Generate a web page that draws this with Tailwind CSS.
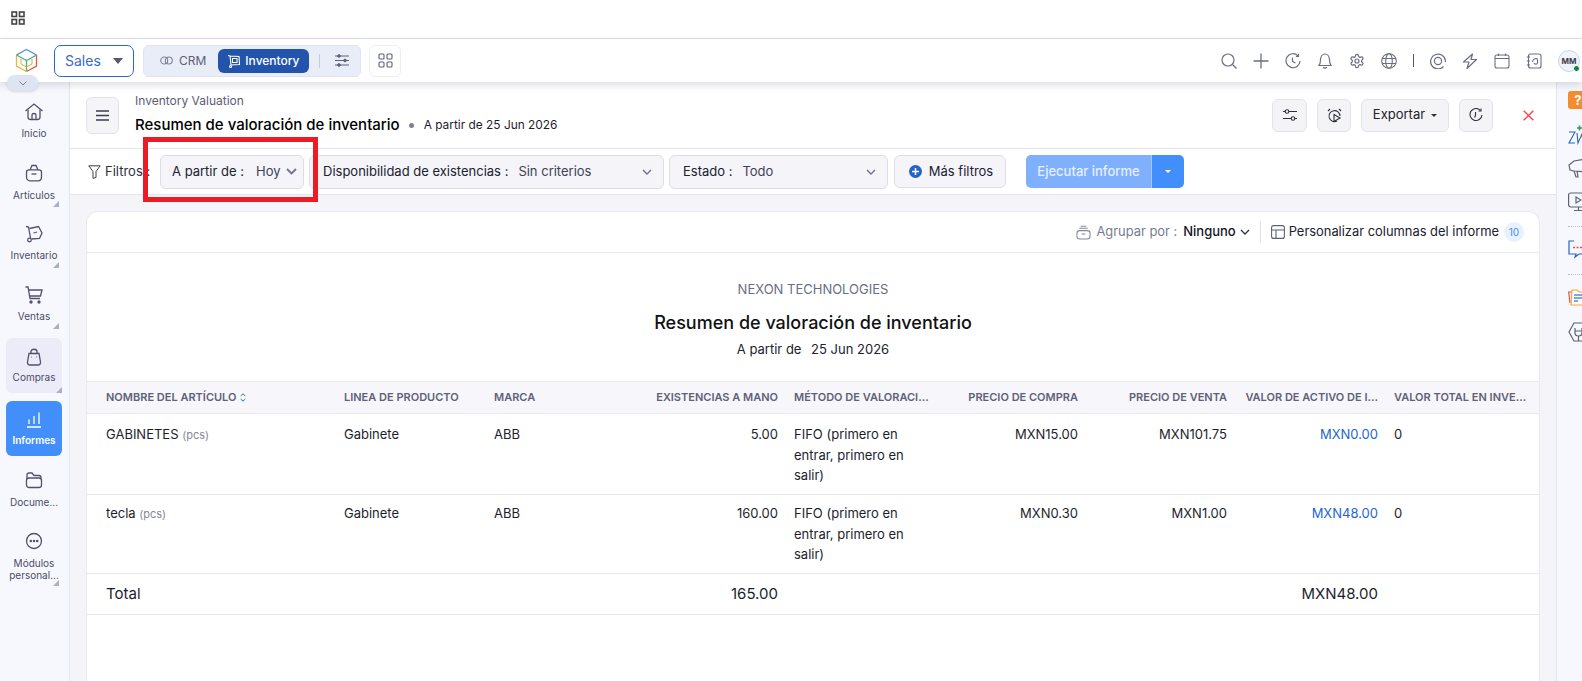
<!DOCTYPE html>
<html lang="en">
<head>
  <meta charset="UTF-8">
  <title>Resumen de valoración de inventario</title>
  <script src="https://cdn.jsdelivr.net/npm/@tailwindcss/browser@4"></script>
</head>
<body class="h-screen overflow-hidden bg-white font-['Inter',sans-serif] text-[13px] text-[#1d1e2c] relative">

  <!-- top strip -->
  <div class="h-[39px] border-b border-[#dedfe6] pl-[11px] pt-[11px]">
    <svg width="14" height="14" viewBox="0 0 14 14" fill="none" stroke="#444" stroke-width="1.6"><rect x="1" y="1" width="4.5" height="4.5"/><rect x="8.5" y="1" width="4.5" height="4.5"/><rect x="1" y="8.5" width="4.5" height="4.5"/><rect x="8.5" y="8.5" width="4.5" height="4.5"/></svg>
  </div>

  <!-- app header -->
  <div class="relative z-10 h-[43px] flex items-center bg-white shadow-[0_3px_8px_rgba(40,45,70,0.16)]">
    <svg class="ml-[15px]" width="23" height="25" viewBox="0 0 23 25" fill="none" stroke-width="1.3">
      <path d="M1.5 7 L11.5 1.5 L21.5 7" stroke="#4a90d9"/>
      <path d="M1.5 7 V18 L11.5 23.5" stroke="#f2b632"/>
      <path d="M21.5 7 V18 L11.5 23.5" stroke="#e5574d"/>
      <path d="M1.5 7 L11.5 12.5 L21.5 7" stroke="#4cae8a"/>
      <path d="M11.5 12.5 V23" stroke="#4caf6a"/>
      <path d="M6 11 V16 L11.5 19 L17 16 V11" stroke="#c9b44a" stroke-width="1"/>
    </svg>
    <div class="ml-[16px] w-[80px] h-[32px] border border-[#2b66c9] rounded-[7px] flex items-center pl-[10px] text-[14px] text-[#3b6cc7]">
      Sales
      <span class="ml-[12px] w-0 h-0 border-x-[5px] border-x-transparent border-t-[6px] border-t-[#55586c]"></span>
    </div>
    <div class="ml-[9px] w-[218px] h-[32px] bg-[#e9edf7] border border-[#dfe4f2] rounded-[6px] flex items-center text-[12px]">
      <svg class="ml-[16px]" width="13" height="9" viewBox="0 0 13 9" fill="none" stroke="#7d8096" stroke-width="1.1"><circle cx="4.2" cy="4.5" r="3.5"/><circle cx="8.8" cy="4.5" r="3.5"/></svg>
      <span class="ml-[6px] text-[#5d6078]">CRM</span>
      <div class="ml-[12px] w-[91px] h-[24px] rounded-[6px] bg-[#2354ab] flex items-center text-white font-medium">
        <svg class="ml-[9px]" width="14" height="14" viewBox="0 0 14 14" fill="none" stroke="#fff" stroke-width="1.1"><path d="M1 1.5 L3 2 L4 11 L12.5 10.5 L12 2.5 L3 2"/><path d="M5.5 4.5 H10 V8.5 H5.5 Z"/><circle cx="3.5" cy="12.5" r="1"/></svg>
        <span class="ml-[4px]">Inventory</span>
      </div>
      <span class="ml-[10px] w-px h-[14px] bg-[#c6cadb]"></span>
      <svg class="ml-[15px]" width="14" height="13" viewBox="0 0 14 13" fill="none" stroke="#5d6078" stroke-width="1"><path d="M0 2 H14 M0 6.5 H14 M0 11 H14"/><circle cx="4" cy="2" r="1.3" fill="#5d6078"/><circle cx="10" cy="6.5" r="1.3" fill="#5d6078"/><circle cx="4" cy="11" r="1.3" fill="#5d6078"/></svg>
    </div>
    <div class="ml-[8px] w-[32px] h-[32px] border border-[#eceef4] rounded-[6px] flex items-center justify-center">
      <svg width="15" height="15" viewBox="0 0 15 15" fill="none" stroke="#5d6078" stroke-width="1.1"><rect x="1" y="1" width="5" height="5" rx="1"/><rect x="9" y="1" width="5" height="5" rx="1"/><rect x="1" y="9" width="5" height="5" rx="1"/><rect x="9" y="9" width="5" height="5" rx="1"/></svg>
    </div>

    <div class="ml-auto flex items-center">
      <div class="flex items-center gap-[16px]">
        <!-- search -->
        <svg width="16" height="16" viewBox="0 0 16 16" fill="none" stroke="#6b6e82" stroke-width="1.2"><circle cx="7" cy="7" r="6"/><path d="M11.5 11.5 L15.5 15.5"/></svg>
        <!-- plus -->
        <svg width="16" height="16" viewBox="0 0 16 16" fill="none" stroke="#6b6e82" stroke-width="1.3"><path d="M8 0.5 V15.5 M0.5 8 H15.5"/></svg>
        <!-- history -->
        <svg width="16" height="16" viewBox="0 0 16 16" fill="none" stroke="#6b6e82" stroke-width="1.2"><path d="M13 2.8 A7 7 0 1 0 15 8"/><path d="M13.5 0.8 V3.4 H10.9"/><path d="M7.5 4.5 V8.5 L10.5 10"/></svg>
        <!-- bell -->
        <svg width="16" height="16" viewBox="0 0 16 16" fill="none" stroke="#6b6e82" stroke-width="1.2"><path d="M2 12.5 C3.5 11 3.3 9 3.5 6.5 C3.7 3.5 5.5 1 8 1 C10.5 1 12.3 3.5 12.5 6.5 C12.7 9 12.5 11 14 12.5 Z"/><path d="M6.3 14 C6.8 15.5 9.2 15.5 9.7 14"/></svg>
        <!-- gear -->
        <svg width="16" height="16" viewBox="0 0 24 24" fill="none" stroke="#6b6e82" stroke-width="1.8"><path d="M12.22 2h-.44a2 2 0 0 0-2 2v.18a2 2 0 0 1-1 1.73l-.43.25a2 2 0 0 1-2 0l-.15-.08a2 2 0 0 0-2.73.73l-.22.38a2 2 0 0 0 .73 2.73l.15.1a2 2 0 0 1 1 1.72v.51a2 2 0 0 1-1 1.74l-.15.09a2 2 0 0 0-.73 2.73l.22.38a2 2 0 0 0 2.73.73l.15-.08a2 2 0 0 1 2 0l.43.25a2 2 0 0 1 1 1.73V20a2 2 0 0 0 2 2h.44a2 2 0 0 0 2-2v-.18a2 2 0 0 1 1-1.73l.43-.25a2 2 0 0 1 2 0l.15.08a2 2 0 0 0 2.73-.73l.22-.39a2 2 0 0 0-.73-2.73l-.15-.08a2 2 0 0 1-1-1.74v-.5a2 2 0 0 1 1-1.74l.15-.09a2 2 0 0 0 .73-2.73l-.22-.38a2 2 0 0 0-2.73-.73l-.15.08a2 2 0 0 1-2 0l-.43-.25a2 2 0 0 1-1-1.73V4a2 2 0 0 0-2-2z"/><circle cx="12" cy="12" r="3"/></svg>
        <!-- globe -->
        <svg width="16" height="16" viewBox="0 0 16 16" fill="none" stroke="#6b6e82" stroke-width="1.1"><circle cx="8" cy="8" r="7.3"/><ellipse cx="8" cy="8" rx="3.3" ry="7.3"/><path d="M1 5.5 H15 M1 10.5 H15"/></svg>
      </div>
      <span class="ml-[16px] w-px h-[13px] bg-[#55586c]"></span>
      <div class="ml-[16px] flex items-center gap-[16px]">
        <!-- at -->
        <svg width="16" height="16" viewBox="0 0 16 16" fill="none" stroke="#6b6e82" stroke-width="1.2"><path d="M13.5 13.5 A7.4 7.4 0 1 1 15.4 8 V9"/><circle cx="8" cy="8" r="3.6"/></svg>
        <!-- bolt -->
        <svg width="16" height="16" viewBox="0 0 16 16" fill="none" stroke="#6b6e82" stroke-width="1.2"><path d="M10.5 1 L1.5 9 H7 L5 15.5 L14.5 6.5 H9 Z" stroke-linejoin="round"/></svg>
        <!-- calendar -->
        <svg width="16" height="16" viewBox="0 0 16 16" fill="none" stroke="#6b6e82" stroke-width="1.1"><rect x="1" y="2" width="14" height="13" rx="2"/><path d="M1 5.5 H15 M4.5 0.5 V3 M11.5 0.5 V3"/></svg>
        <!-- contacts -->
        <svg width="16" height="16" viewBox="0 0 16 16" fill="none" stroke="#6b6e82" stroke-width="1.1"><rect x="2.5" y="1" width="12.5" height="14" rx="2"/><path d="M0.8 4 H4 M0.8 8 H4 M0.8 12 H4"/><path d="M6.5 9 C6.5 6 11.5 4 11.5 7 V10 C11.5 11.5 8 11.5 8 10"/></svg>
      </div>
      <div class="relative ml-[16px] mr-[2px] w-[22px] h-[22px] rounded-full bg-[#f1f3fa] border border-[#c9d4ee] flex items-center justify-center text-[8px] font-bold text-[#3b3d4d]">
        MM
        <span class="absolute right-[-1px] bottom-[-1px] w-[7px] h-[7px] rounded-full bg-[#14803f] border border-white"></span>
      </div>
    </div>
  </div>

  <!-- collapse pill over sidebar -->
  <div class="absolute z-20 left-[7px] top-[75px] w-[31px] h-[16px] rounded-full bg-[#dfe4f2] shadow-sm flex items-center justify-center">
    <svg width="8" height="5" viewBox="0 0 8 5" fill="none" stroke="#7d8096" stroke-width="1"><path d="M0.5 0.5 L4 4 L7.5 0.5"/></svg>
  </div>

  <div class="flex h-[599px]">
    <!-- left nav -->
    <aside class="w-[70px] shrink-0 bg-[#f7f8fd] border-r border-[#e4e5ef] pt-[11px] pl-[6px] flex flex-col gap-[6px] text-[10px] text-[#4a4c66]">
      <div class="relative w-[56px] h-[55px] flex flex-col items-center pt-[9px]">
        <svg width="20" height="20" viewBox="0 0 20 20" fill="none" stroke="#50526b" stroke-width="1.3"><path d="M1.5 9 L10 2 L18.5 9"/><path d="M4 7.5 V15 C4 16.5 5 17.5 6.5 17.5 H13.5 C15 17.5 16 16.5 16 15 V7.5"/><path d="M8 17.5 V13 C8 11 12 11 12 13 V17.5"/></svg>
        <span class="mt-[4px] leading-[14px]">Inicio</span>
      </div>
      <div class="relative w-[56px] h-[55px] flex flex-col items-center pt-[9px]">
        <svg width="20" height="20" viewBox="0 0 20 20" fill="none" stroke="#50526b" stroke-width="1.3"><path d="M6 7 L8 2.5 H12 L14 7"/><path d="M2.5 9 C2.5 7.5 3.5 6.8 5 6.8 H15 C16.5 6.8 17.5 7.5 17.5 9 V14 C17.5 16.5 16 17.8 14 17.8 H6 C4 17.8 2.5 16.5 2.5 14 Z"/><path d="M7.5 11 H12.5"/></svg>
        <span class="mt-[5px] leading-[14px]">Artículos</span>
        <span class="absolute right-[3px] bottom-[2px] w-0 h-0 border-l-[6px] border-l-transparent border-b-[6px] border-b-[#a9afc4]"></span>
      </div>
      <div class="relative w-[56px] h-[55px] flex flex-col items-center pt-[9px]">
        <svg width="20" height="20" viewBox="0 0 20 20" fill="none" stroke="#50526b" stroke-width="1.3"><path d="M2 2.5 L4.5 3 L6.5 14"/><path d="M5.5 4.5 L14.5 2.5 L18 9 L15.5 14.5 L7.5 15"/><path d="M9.5 9 L13 8"/><circle cx="5.5" cy="16" r="1.8"/></svg>
        <span class="mt-[4px] leading-[14px]">Inventario</span>
        <span class="absolute right-[3px] bottom-[2px] w-0 h-0 border-l-[6px] border-l-transparent border-b-[6px] border-b-[#a9afc4]"></span>
      </div>
      <div class="relative w-[56px] h-[55px] flex flex-col items-center pt-[9px]">
        <svg width="20" height="20" viewBox="0 0 20 20" fill="none" stroke="#50526b" stroke-width="1.3"><path d="M1.5 2 H4 L6 13.5 H16"/><path d="M4.5 5 H18 L16.5 11 H5.5"/><circle cx="7" cy="17" r="1" fill="#50526b"/><circle cx="15" cy="17" r="1" fill="#50526b"/></svg>
        <span class="mt-[4px] leading-[14px]">Ventas</span>
        <span class="absolute right-[3px] bottom-[2px] w-0 h-0 border-l-[6px] border-l-transparent border-b-[6px] border-b-[#a9afc4]"></span>
      </div>
      <div class="relative mt-[1px] w-[56px] h-[55px] rounded-[6px] bg-[#ecebf8] flex flex-col items-center pt-[9px]">
        <svg width="20" height="20" viewBox="0 0 20 20" fill="none" stroke="#50526b" stroke-width="1.3"><path d="M7 6.5 V4.5 C7 1.5 13 1.5 13 4.5 V6.5"/><path d="M5 6.5 H15 L16.5 15 C16.8 17 15.5 18 14 18 H6 C4.5 18 3.2 17 3.5 15 Z"/><path d="M7.5 10 H8 M12 10 H12.5"/></svg>
        <span class="mt-[3px] leading-[14px]">Compras</span>
        <span class="absolute right-0 bottom-0 w-0 h-0 border-l-[6px] border-l-transparent border-b-[6px] border-b-[#a9afc4]"></span>
      </div>
      <div class="mt-[2px] w-[56px] h-[55px] rounded-[6px] bg-[#428ffc] text-white font-semibold flex flex-col items-center pt-[9px]">
        <svg width="20" height="20" viewBox="0 0 20 20" fill="none" stroke="#fff" stroke-width="1.3"><path d="M3 17 H17 M5 14 V9.5 M10 14 V6 M15 14 V2.5"/></svg>
        <span class="mt-[3px] leading-[14px]">Informes</span>
      </div>
      <div class="mt-[-1px] w-[56px] h-[55px] flex flex-col items-center pt-[9px]">
        <svg width="20" height="20" viewBox="0 0 20 20" fill="none" stroke="#50526b" stroke-width="1.3"><path d="M3 9 V5 C3 3.5 4 3 5 3 H8 L10 5.5 H15 C16.5 5.5 17 6.5 17 8"/><rect x="2.5" y="8" width="15" height="9.5" rx="2.5"/></svg>
        <span class="mt-[5px] leading-[14px]">Docume...</span>
      </div>
      <div class="relative w-[56px] h-[62px] flex flex-col items-center pt-[9px]">
        <svg width="20" height="20" viewBox="0 0 20 20" fill="none" stroke="#50526b" stroke-width="1.3"><circle cx="10" cy="10" r="7.5"/><circle cx="6.8" cy="10" r="0.6" fill="#50526b"/><circle cx="10" cy="10" r="0.6" fill="#50526b"/><circle cx="13.2" cy="10" r="0.6" fill="#50526b"/></svg>
        <span class="mt-[6px] leading-[12px] text-center">Módulos<br>personal...</span>
        <span class="absolute right-[3px] bottom-[-2px] w-0 h-0 border-l-[6px] border-l-transparent border-b-[6px] border-b-[#a9afc4]"></span>
      </div>
    </aside>

    <!-- main -->
    <main class="flex-1 min-w-0 flex flex-col bg-[#f4f4f9]">
      <div class="h-[67px] bg-white border-b border-[#e4e5ef] flex items-center pl-[16px] shrink-0">
        <div class="w-[33px] h-[37px] bg-[#f5f5f7] border border-[#e2e3ea] rounded-[6px] flex items-center justify-center">
          <svg width="13" height="11" viewBox="0 0 13 11" fill="none" stroke="#3b3d4d" stroke-width="1.6"><path d="M0 1 H13 M0 5.5 H13 M0 10 H13"/></svg>
        </div>
        <div class="ml-[16px] pb-[2px]">
          <div class="text-[12px] leading-[16px] text-[#5a5d75]">Inventory Valuation</div>
          <div class="mt-[6px] flex items-center leading-[20px]">
            <span class="text-[15px] font-medium text-black">Resumen de valoración de inventario</span>
            <span class="ml-[9px] w-[5px] h-[5px] rounded-full bg-[#7d8096]"></span>
            <span class="ml-[10px] text-[11.9px]">A partir de 25 Jun 2026</span>
          </div>
        </div>
        <div class="ml-auto flex items-center gap-[10px] pr-[63px] relative">
          <div class="w-[35px] h-[33px] bg-[#f4f4f6] border border-[#e2e3ea] rounded-[6px] flex items-center justify-center">
            <svg width="14" height="14" viewBox="0 0 14 14" fill="none" stroke="#2e3040" stroke-width="1.1"><path d="M0 3.5 H14 M0 10.5 H14"/><circle cx="4" cy="3.5" r="1.8" fill="#f4f4f6"/><circle cx="10" cy="10.5" r="1.8" fill="#f4f4f6"/></svg>
          </div>
          <div class="w-[34px] h-[33px] bg-[#f4f4f6] border border-[#e2e3ea] rounded-[6px] flex items-center justify-center">
            <svg width="15" height="15" viewBox="0 0 15 15" fill="none" stroke="#2e3040" stroke-width="1.1"><path d="M10 13 A5.5 5.5 0 1 1 13 8"/><path d="M1 3 L3 1 M14 3 L12 1"/><path d="M7 6.5 L13 10 L7 13.5 Z"/></svg>
          </div>
          <div class="w-[88px] h-[33px] bg-[#f4f4f6] border border-[#e2e3ea] rounded-[6px] flex items-center justify-center gap-[6px] text-[#20222f]">
            Exportar
            <span class="w-0 h-0 border-x-[3px] border-x-transparent border-t-[3px] border-t-[#2e3040]"></span>
          </div>
          <div class="w-[34px] h-[33px] bg-[#f4f4f6] border border-[#e2e3ea] rounded-[6px] flex items-center justify-center">
            <svg width="14" height="14" viewBox="0 0 14 14" fill="none" stroke="#2e3040" stroke-width="1.1"><path d="M11.5 2.5 A6 6 0 1 0 13 7"/><path d="M12 0.5 V3 H9.5"/><path d="M6.5 4 V7.5 L5.5 9.5"/></svg>
          </div>
          <svg class="absolute right-[22px] top-[11px]" width="11" height="11" viewBox="0 0 11 11" fill="none" stroke="#ef4b55" stroke-width="1.5"><path d="M0.7 0.7 L10.3 10.3 M10.3 0.7 L0.7 10.3"/></svg>
        </div>
      </div>

      <!-- filters -->
      <div class="h-[46px] bg-white border-b border-[#e4e5ef] flex items-center shrink-0 pl-[18px]">
        <svg width="13" height="14" viewBox="0 0 13 14" fill="none" stroke="#3b3d4d" stroke-width="1"><path d="M0.8 0.8 H12.2 L8 6.5 V12.5 L5 13.3 V6.5 Z" stroke-linejoin="round"/></svg>
        <span class="ml-[4px] w-[55px] text-[#2e3040]">Filtros :</span>
        <div class="w-[144px] h-[34px] bg-[#f4f4f9] border border-[#dcdde9] rounded-[6px] flex items-center pl-[11px] pr-[6px]">
          <span class="text-[#20222f]">A partir de :</span>
          <span class="ml-[12px] text-[#3f4156]">Hoy</span>
          <svg class="ml-auto" width="11" height="7" viewBox="0 0 11 7" fill="none" stroke="#71748a" stroke-width="1.8"><path d="M1 1 L5.5 5.5 L10 1"/></svg>
        </div>
        <div class="ml-[5px] w-[355px] h-[34px] bg-[#f4f4f9] border border-[#dcdde9] rounded-[6px] flex items-center pl-[13px] pr-[11px]">
          <span class="text-[#20222f]">Disponibilidad de existencias :</span>
          <span class="ml-[10px] text-[#3f4156]">Sin criterios</span>
          <svg class="ml-auto" width="10" height="6" viewBox="0 0 10 6" fill="none" stroke="#71748a" stroke-width="1.4"><path d="M1 1 L5 5 L9 1"/></svg>
        </div>
        <div class="ml-[5px] w-[219px] h-[34px] bg-[#f4f4f9] border border-[#dcdde9] rounded-[6px] flex items-center pl-[13px] pr-[11px]">
          <span class="text-[#20222f]">Estado :</span>
          <span class="ml-[10px] text-[#3f4156]">Todo</span>
          <svg class="ml-auto" width="10" height="6" viewBox="0 0 10 6" fill="none" stroke="#71748a" stroke-width="1.4"><path d="M1 1 L5 5 L9 1"/></svg>
        </div>
        <div class="ml-[6px] w-[112px] h-[33px] bg-[#f4f4f9] border border-[#dcdde9] rounded-[6px] flex items-center justify-center gap-[7px] pl-[2px] text-[#20222f]">
          <span class="w-[13px] h-[13px] rounded-full bg-[#2563c9] text-white flex items-center justify-center">
            <svg width="7" height="7" viewBox="0 0 7 7" stroke="#fff" stroke-width="1.5"><path d="M3.5 0 V7 M0 3.5 H7"/></svg>
          </span>
          Más filtros
        </div>
        <div class="ml-[20px] h-[33px] flex rounded-[5px] overflow-hidden">
          <div class="w-[126px] bg-[#7fb0fd] text-white/80 font-medium flex items-center justify-center border-r border-[#a9c9fb]">Ejecutar informe</div>
          <div class="w-[32px] bg-[#428ffc] flex items-center justify-center">
            <span class="w-0 h-0 border-x-[3px] border-x-transparent border-t-[3px] border-t-white"></span>
          </div>
        </div>
      </div>

      <!-- report card -->
      <div class="flex-1 min-h-0 ml-[16px] mr-[16px] mt-[16px] bg-white border border-[#e8e9f1] border-b-0 rounded-t-[12px] overflow-hidden">
        <div class="h-[41px] border-b border-[#e8e9f1] flex items-center justify-end pr-[15px]">
          <svg width="15" height="15" viewBox="0 0 16 15" fill="none" stroke="#85889c" stroke-width="1.1"><path d="M5 0.8 H11 M3.5 3 H12.5"/><rect x="1" y="5.5" width="14" height="9" rx="3"/><path d="M6 9 H10"/></svg>
          <span class="ml-[5px] text-[12.9px] text-[#787b90]">Agrupar por :</span>
          <span class="ml-[6px] font-medium text-[#15161f]">Ninguno</span>
          <svg class="ml-[4px]" width="10" height="6" viewBox="0 0 10 6" fill="none" stroke="#2e3040" stroke-width="1.3"><path d="M1 1 L5 5 L9 1"/></svg>
          <span class="ml-[10px] w-px h-[22px] bg-[#e0e1ea]"></span>
          <svg class="ml-[10px]" width="14" height="14" viewBox="0 0 14 14" fill="none" stroke="#5d6078" stroke-width="1.1"><rect x="0.6" y="0.6" width="12.8" height="12.8" rx="2"/><path d="M0.6 5 H13.4 M5 5 V13.4"/></svg>
          <span class="ml-[4px] text-[12.9px] text-[#20222f]">Personalizar columnas del informe</span>
          <span class="ml-[5px] w-[20px] h-[20px] rounded-full bg-[#e8f1fe] text-[#428ffc] text-[10px] flex items-center justify-center">10</span>
        </div>

        <div class="pt-[26px] text-center">
          <div class="leading-[20px] text-[#6b6e82]">NEXON TECHNOLOGIES</div>
          <div class="mt-[12px] text-[18px] font-medium leading-[24px] text-[#111]">Resumen de valoración de inventario</div>
          <div class="mt-[4px] leading-[20px] text-[#20222f]">A partir de <span class="ml-[6px]">25 Jun 2026</span></div>
        </div>

        <!-- table -->
        <div class="mt-[22px] grid grid-cols-[257px_150px_110px_190px_156px_144px_149px_151px_1fr]">
          <div class="contents text-[11px] font-semibold text-[#5f6178]">
            <div class="h-[33px] bg-[#f7f7fb] border-y border-[#e8e9f1] pl-[19px] flex items-center gap-[4px]">NOMBRE DEL ARTÍCULO
              <svg width="6" height="9" viewBox="0 0 6 9" fill="none" stroke="#5f6178" stroke-width="1"><path d="M0.7 3 L3 0.8 L5.3 3"/><path d="M0.7 6 L3 8.2 L5.3 6" stroke="#2563c9"/></svg>
            </div>
            <div class="h-[33px] bg-[#f7f7fb] border-y border-[#e8e9f1] flex items-center">LINEA DE PRODUCTO</div>
            <div class="h-[33px] bg-[#f7f7fb] border-y border-[#e8e9f1] flex items-center">MARCA</div>
            <div class="h-[33px] bg-[#f7f7fb] border-y border-[#e8e9f1] flex items-center justify-end pr-[16px]">EXISTENCIAS A MANO</div>
            <div class="h-[33px] bg-[#f7f7fb] border-y border-[#e8e9f1] flex items-center">MÉTODO DE VALORACI...</div>
            <div class="h-[33px] bg-[#f7f7fb] border-y border-[#e8e9f1] flex items-center justify-end pr-[16px]">PRECIO DE COMPRA</div>
            <div class="h-[33px] bg-[#f7f7fb] border-y border-[#e8e9f1] flex items-center justify-end pr-[16px]">PRECIO DE VENTA</div>
            <div class="h-[33px] bg-[#f7f7fb] border-y border-[#e8e9f1] flex items-center justify-end pr-[16px]">VALOR DE ACTIVO DE I...</div>
            <div class="h-[33px] bg-[#f7f7fb] border-y border-[#e8e9f1] flex items-center">VALOR TOTAL EN INVE...</div>
          </div>

          <div class="h-[81px] border-b border-[#e8e9f1] pl-[19px] pt-[10px] leading-[20px]">GABINETES <span class="text-[11px] text-[#85889c]">(pcs)</span></div>
          <div class="h-[81px] border-b border-[#e8e9f1] pt-[10px] leading-[20px]">Gabinete</div>
          <div class="h-[81px] border-b border-[#e8e9f1] pt-[10px] leading-[20px]">ABB</div>
          <div class="h-[81px] border-b border-[#e8e9f1] pt-[10px] leading-[20px] text-right pr-[16px]">5.00</div>
          <div class="h-[81px] border-b border-[#e8e9f1] pt-[10px] leading-[20.5px] pr-[20px]">FIFO (primero en entrar, primero en salir)</div>
          <div class="h-[81px] border-b border-[#e8e9f1] pt-[10px] leading-[20px] text-right pr-[16px]">MXN15.00</div>
          <div class="h-[81px] border-b border-[#e8e9f1] pt-[10px] leading-[20px] text-right pr-[16px]">MXN101.75</div>
          <div class="h-[81px] border-b border-[#e8e9f1] pt-[10px] leading-[20px] text-right pr-[16px] text-[#2366d1]">MXN0.00</div>
          <div class="h-[81px] border-b border-[#e8e9f1] pt-[10px] leading-[20px]">0</div>

          <div class="h-[79px] border-b border-[#e8e9f1] pl-[19px] pt-[8px] leading-[20px]">tecla <span class="text-[11px] text-[#85889c]">(pcs)</span></div>
          <div class="h-[79px] border-b border-[#e8e9f1] pt-[8px] leading-[20px]">Gabinete</div>
          <div class="h-[79px] border-b border-[#e8e9f1] pt-[8px] leading-[20px]">ABB</div>
          <div class="h-[79px] border-b border-[#e8e9f1] pt-[8px] leading-[20px] text-right pr-[16px]">160.00</div>
          <div class="h-[79px] border-b border-[#e8e9f1] pt-[8px] leading-[20.5px] pr-[20px]">FIFO (primero en entrar, primero en salir)</div>
          <div class="h-[79px] border-b border-[#e8e9f1] pt-[8px] leading-[20px] text-right pr-[16px]">MXN0.30</div>
          <div class="h-[79px] border-b border-[#e8e9f1] pt-[8px] leading-[20px] text-right pr-[16px]">MXN1.00</div>
          <div class="h-[79px] border-b border-[#e8e9f1] pt-[8px] leading-[20px] text-right pr-[16px] text-[#2366d1]">MXN48.00</div>
          <div class="h-[79px] border-b border-[#e8e9f1] pt-[8px] leading-[20px]">0</div>

          <div class="h-[41px] border-b border-[#e8e9f1] pl-[19px] flex items-center text-[15px]">Total</div>
          <div class="h-[41px] border-b border-[#e8e9f1]"></div>
          <div class="h-[41px] border-b border-[#e8e9f1]"></div>
          <div class="h-[41px] border-b border-[#e8e9f1] flex items-center justify-end pr-[16px] text-[15px]">165.00</div>
          <div class="h-[41px] border-b border-[#e8e9f1]"></div>
          <div class="h-[41px] border-b border-[#e8e9f1]"></div>
          <div class="h-[41px] border-b border-[#e8e9f1]"></div>
          <div class="h-[41px] border-b border-[#e8e9f1] flex items-center justify-end pr-[16px] text-[15px]">MXN48.00</div>
          <div class="h-[41px] border-b border-[#e8e9f1]"></div>
        </div>
      </div>
    </main>

    <!-- right rail, runs off the window edge -->
    <aside class="w-[26px] shrink-0 bg-[#f7f8fd] border-l border-[#e4e5ef] pl-[11px] pt-[9px] overflow-hidden flex flex-col">
      <div class="w-[20px] h-[18px] shrink-0 rounded-[3px] bg-[#f58a2e] text-white font-bold text-[13px] leading-[18px] text-center">?</div>
      <svg class="mt-[16px] shrink-0" width="24" height="20" viewBox="0 0 24 20" fill="none" stroke="#2563c9" stroke-width="1.1"><path d="M1 7 H7 L1 18 H7 M9 8 L10 18 L14 9 L15 18 L21 6"/><path d="M9 3 H14 M11.5 0.5 V5.5" stroke="#2e9e4f" stroke-width="1.6"/></svg>
      <svg class="mt-[13px] shrink-0" width="22" height="22" viewBox="0 0 22 22" fill="none" stroke="#5d6078" stroke-width="1.2"><path d="M1 7 L6 3 L18 1 V14 L6 13 L2 12 Z"/><path d="M6 13 L8 19 H10 L9 13"/></svg>
      <svg class="mt-[12px] shrink-0" width="22" height="20" viewBox="0 0 22 20" fill="none" stroke="#5d6078" stroke-width="1.2"><rect x="0.6" y="1" width="20" height="14" rx="2"/><path d="M8 5 L13 8 L8 11 Z M10.5 15 V18 M6 18.5 H15"/></svg>
      <div class="mt-[14px] shrink-0 w-[16px] border-t border-dotted border-[#b9bccb]"></div>
      <svg class="mt-[13px] shrink-0" width="22" height="20" viewBox="0 0 22 20" fill="none" stroke="#2563c9" stroke-width="1.2"><path d="M6 1 H1 V14 H8 L7 17 L11 14 H21 V1 H16"/><path d="M5 7.5 H20" stroke="#ef4b55" stroke-dasharray="2 1.5" stroke-width="1.5"/></svg>
      <div class="mt-[14px] shrink-0 w-[16px] border-t border-dotted border-[#b9bccb]"></div>
      <svg class="mt-[14px] shrink-0" width="22" height="18" viewBox="0 0 22 18" fill="none" stroke-width="1.2"><path d="M2 14 L0.7 3 H8" stroke="#ef4b55"/><path d="M4 1 H9 L11 3 H20 V16 H3 Z" stroke="#f2a93b" fill="#fff"/><path d="M6 6 H17 M6 9 H14 M6 12 H10" stroke="#4a90d9" stroke-width="1.6"/></svg>
      <svg class="mt-[15px] shrink-0" width="22" height="20" viewBox="0 0 22 20" fill="none" stroke="#5d6078" stroke-width="1.2"><path d="M6 1 H15 L20 10 L15 19 H6 L1 10 Z"/><path d="M7 6 V11 C7 15 14 15 14 11 V6 M7 9 H14 M10.5 14 V19"/></svg>
    </aside>
  </div>

  <!-- red annotation box drawn over the screenshot -->
  <div class="absolute left-[143px] top-[137px] w-[175px] h-[65px] border-[5px] border-[#ed1c24]"></div>
</body>
</html>
